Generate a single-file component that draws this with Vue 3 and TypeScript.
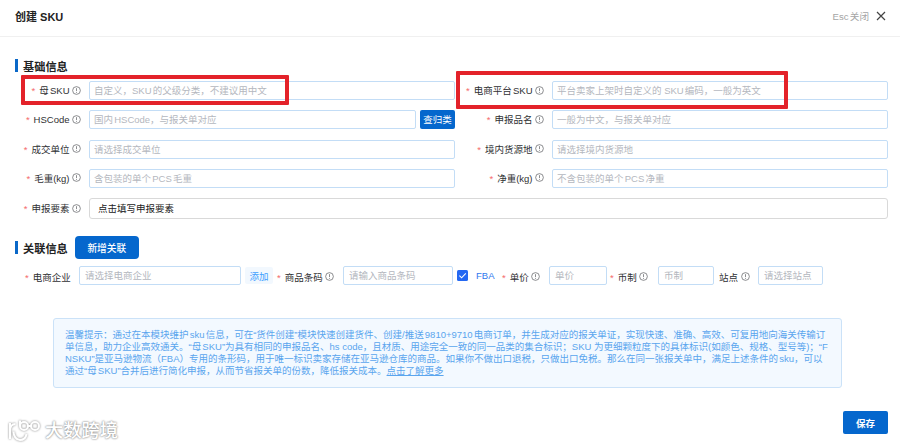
<template>
    <div class="dialog">
        <header class="dialog-header">
            <strong class="dialog-title">创建 SKU</strong>
            <div class="dialog-close" @click="close">
                <span>Esc关闭</span>
                <svg class="icon-close" viewBox="0 0 10 10">
                    <path d="M1 1L9 9M9 1L1 9" />
                </svg>
            </div>
        </header>

        <main class="dialog-body">
            <div class="section-title">基础信息</div>
            <div class="form-grid">
                <div v-for="field in fields" :key="field.label" class="form-item" :class="field.className">
                    <label class="form-label">
                        <i class="required">*</i>
                        <span>{{ field.label }}</span>
                        <svg class="icon-info" viewBox="0 0 10 10">
                            <circle cx="5" cy="5" r="4.3" />
                            <path d="M5 2.4V5.7M5 6.7V7.6" />
                        </svg>
                    </label>
                    <button v-if="field.button" class="btn-fill">{{ field.button }}</button>
                    <input v-else v-model="form[field.label]" class="form-control" type="text"
                        :placeholder="field.placeholder">
                    <button v-if="field.action" class="btn-check">{{ field.action }}</button>
                    <div v-if="field.marked" class="mark"></div>
                </div>
            </div>

            <div class="section-title section-title--relation">
                关联信息
                <button class="btn-new">新增关联</button>
            </div>
            <div class="relation-row">
                <template v-for="item in relations" :key="item.label">
                    <label class="relation-label" :class="'relation-label--' + item.name">
                        <i v-if="item.required" class="required">*</i>
                        <span>{{ item.label }}</span>
                        <svg v-if="item.info" class="icon-info" viewBox="0 0 10 10">
                            <circle cx="5" cy="5" r="4.3" />
                            <path d="M5 2.4V5.7M5 6.7V7.6" />
                        </svg>
                    </label>
                    <input v-model="form[item.label]" class="form-control" :class="'control--' + item.name" type="text"
                        :placeholder="item.placeholder">
                    <button v-if="item.name === 'company'" class="btn-add">添加</button>
                    <div v-if="item.name === 'barcode'" class="fba" @click="fba = !fba">
                        <span class="checkbox" :class="{ 'checkbox--checked': fba }">
                            <svg v-if="fba" viewBox="0 0 11 11">
                                <path d="M2.4 5.6L4.6 7.8L8.8 3.3" />
                            </svg>
                        </span>
                        <span>FBA</span>
                    </div>
                </template>
            </div>

            <div class="tips">
                <p v-for="(line, index) in tips" :key="index" class="tips-line">{{ line
                    }}<a v-if="index === tips.length - 1" class="tips-link">点击了解更多</a></p>
            </div>
        </main>

        <footer class="dialog-footer">
            <div class="watermark">
                <svg class="watermark-logo" viewBox="0 0 34 24">
                    <path d="M2 4V20M2 12C2 7 4 5 7.500 5M5.500 12.500C5.500 17 8 21 12 21C15.500 21 18 18.500 18.500 15" />
                    <path d="M12 1.500V7" />
                    <circle cx="16" cy="7" r="4" />
                    <circle cx="27" cy="7" r="4" />
                    <path d="M20 7H23" />
                </svg>
                <span>大数跨境</span>
            </div>
            <button class="btn-save">保存</button>
        </footer>
    </div>
</template>
<script lang="ts" setup>
import { reactive, ref } from 'vue';

interface Field {
    label: string;
    placeholder?: string;
    button?: string;
    action?: string;
    marked?: boolean;
    className?: string;
}

interface Relation {
    name: string;
    label: string;
    placeholder: string;
    required: boolean;
    info: boolean;
}

const emit = defineEmits(['close']);

const form = reactive<Record<string, string>>({});
const fba = ref(true);

const fields: Field[] = [
    { label: '母SKU', placeholder: '自定义，SKU的父级分类，不建议用中文', marked: true, className: 'form-item--parent' },
    { label: '电商平台SKU', placeholder: '平台卖家上架时自定义的 SKU编码，一般为英文', marked: true, className: 'form-item--platform' },
    { label: 'HSCode', placeholder: '国内HSCode，与报关单对应', action: '查归类' },
    { label: '申报品名', placeholder: '一般为中文，与报关单对应' },
    { label: '成交单位', placeholder: '请选择成交单位' },
    { label: '境内货源地', placeholder: '请选择境内货源地' },
    { label: '毛重(kg)', placeholder: '含包装的单个PCS毛重' },
    { label: '净重(kg)', placeholder: '不含包装的单个PCS净重' },
    { label: '申报要素', button: '点击填写申报要素', className: 'form-item--full' },
];

const relations: Relation[] = [
    { name: 'company', label: '电商企业', placeholder: '请选择电商企业', required: true, info: false },
    { name: 'barcode', label: '商品条码', placeholder: '请输入商品条码', required: true, info: true },
    { name: 'price', label: '单价', placeholder: '单价', required: true, info: true },
    { name: 'currency', label: '币制', placeholder: '币制', required: true, info: true },
    { name: 'site', label: '站点', placeholder: '请选择站点', required: false, info: true },
];

const tips = [
    '温馨提示：通过在本模块维护sku信息，可在“货件创建”模块快速创建货件、创建/推送9810+9710电商订单，并生成对应的报关单证，实现快速、准确、高效、可复用地向海关传输订',
    '单信息，助力企业高效通关。“母SKU”为具有相同的申报品名、hs code，且材质、用途完全一致的同一品类的集合标识；SKU 为更细颗粒度下的具体标识(如颜色、规格、型号等)；“F',
    'NSKU”是亚马逊物流（FBA）专用的条形码，用于唯一标识卖家存储在亚马逊仓库的商品。如果你不做出口退税，只做出口免税。那么在同一张报关单中，满足上述条件的sku，可以',
    '通过“母SKU”合并后进行简化申报，从而节省报关单的份数，降低报关成本。',
];

const close = () => {
    emit('close');
};
</script>
<style>
body {
    background: #fff;
}
</style>
<style scoped>
.dialog {
    display: flex;
    flex-direction: column;
    box-sizing: border-box;
    width: 900px;
    height: 448px;
    overflow: hidden;
    background: #fff;
    color: #303133;
    font-family: "Liberation Sans", "Noto Sans CJK SC", sans-serif;
    font-size: 9.5px;
    text-autospace: normal;
}

.dialog * {
    box-sizing: border-box;
}

button,
input {
    margin: 0;
    font-family: inherit;
    font-size: inherit;
    text-autospace: inherit;
}

.dialog-header {
    display: flex;
    flex: none;
    align-items: center;
    justify-content: space-between;
    height: 37px;
    padding: 0 14px 4px 15px;
    border-bottom: 1px solid #f0f0f0;
}

.dialog-title {
    font-size: 11px;
    font-weight: 600;
    color: #222;
}

.dialog-close {
    display: flex;
    align-items: center;
    gap: 7px;
    color: #a5a5a5;
    font-size: 9.6px;
    cursor: pointer;
}

.icon-close {
    width: 10px;
    height: 10px;
    fill: none;
    stroke: #444;
    stroke-width: 1.2;
}

.dialog-body {
    flex: 1;
    padding: 19px 12px 0 15px;
}

.section-title {
    display: flex;
    align-items: center;
    height: 19px;
    color: #222;
    font-size: 11.2px;
    font-weight: 600;
}

.section-title::before {
    content: '';
    width: 3px;
    height: 13px;
    margin-right: 5px;
    background: #0a68c8;
}

.section-title--relation {
    height: 23px;
    margin-top: 19px;
}

.form-grid {
    display: grid;
    grid-template-columns: 440px 1fr;
    grid-auto-rows: 19px;
    row-gap: 10.3px;
    margin-top: 6px;
}

.form-item {
    display: flex;
    position: relative;
    align-items: center;
}

.form-item--full {
    grid-column: 1 / 3;
    height: 21px;
}

.form-label {
    display: flex;
    flex: none;
    align-items: center;
    justify-content: flex-end;
    width: 66px;
    height: 19px;
    margin-right: 8px;
    padding-bottom: 1px;
    white-space: nowrap;
}

.form-item:nth-child(even) .form-label {
    width: 89px;
}

.required {
    margin: 1px 4px 0 0;
    color: #f56c6c;
    font-style: normal;
    line-height: 9px;
}

.icon-info {
    flex: none;
    width: 9px;
    height: 9px;
    margin-left: 2.5px;
    fill: none;
    stroke: #606266;
    stroke-width: 0.8;
}

.form-control {
    flex: 1;
    min-width: 0;
    height: 19px;
    padding: 0 4px;
    border: 1px solid #c3ddf6;
    border-radius: 2px;
    outline: none;
    background: #fff;
    color: #303133;
}

.form-control::placeholder {
    color: #b4b7be;
    opacity: 1;
}

.btn-check {
    width: 35px;
    height: 19px;
    margin-left: 4px;
    padding: 0 0 1px;
    border: 0;
    border-radius: 2px;
    background: #0567cd;
    color: #fff;
}

.btn-fill {
    flex: 1;
    height: 21px;
    padding: 0 8px 1px;
    border: 1px solid #d9d9d9;
    border-radius: 3px;
    background: #fff;
    color: #222;
    text-align: left;
}

/* highlight frame over the first row */
.mark {
    position: absolute;
    border: 4px solid #e3222a;
    border-radius: 1px;
    pointer-events: none;
}

.form-item--parent .mark {
    top: -6px;
    left: 6px;
    width: 268px;
    height: 30px;
}

.form-item--platform .mark {
    top: -10px;
    left: 1px;
    width: 332px;
    height: 38px;
}

.btn-new {
    width: 64px;
    height: 23px;
    margin-left: 7px;
    padding: 0;
    border: 0;
    border-radius: 4px;
    background: #0567cd;
    color: #fff;
    font-size: 9.7px;
    font-weight: 500;
}

.relation-row {
    display: flex;
    align-items: center;
    height: 19px;
    margin-top: 7px;
    padding-left: 10px;
}

.relation-row .form-control {
    flex: none;
    padding: 0 5px;
}

.relation-label {
    display: flex;
    flex: none;
    align-items: center;
    height: 20px;
    padding-top: 2px;
    white-space: nowrap;
}

.relation-label--company {
    width: 54px;
}

.relation-label--barcode {
    width: 66px;
}

.relation-label--price {
    width: 47px;
}

.relation-label--currency {
    width: 48px;
}

.relation-label--site {
    width: 39px;
}

.control--company {
    width: 162px;
}

.control--barcode {
    width: 110px;
}

.control--price {
    width: 58px;
    margin-right: 3px;
}

.control--currency {
    width: 56px;
    margin-right: 5px;
}

.control--site {
    width: 65px;
}

.btn-add {
    width: 28px;
    height: 17px;
    margin: 0 4px 0 4px;
    padding: 0;
    border: 0;
    border-radius: 2px;
    background: #f2f8fe;
    color: #409eff;
}

.fba {
    display: flex;
    align-items: center;
    width: 49px;
    padding-left: 4px;
    color: #2f78ee;
    cursor: pointer;
}

.checkbox {
    width: 11px;
    height: 11px;
    margin-right: 8px;
    border: 1px solid #c3ddf6;
    border-radius: 1.5px;
}

.checkbox--checked {
    border: 0;
    background: #2468f2;
}

.checkbox svg {
    display: block;
    fill: none;
    stroke: #fff;
    stroke-width: 1.1;
}

.tips {
    width: 789px;
    height: 70px;
    margin: 33px 0 0 38px;
    padding: 10px 11px;
    border: 1px solid #cbe2f8;
    border-radius: 3px;
    background: #f3f9ff;
    color: #5aa5ee;
}

.tips-line {
    height: 12px;
    margin: 0;
    line-height: 12px;
    white-space: nowrap;
}

.tips-link {
    text-decoration: underline;
    cursor: pointer;
}

.dialog-footer {
    display: flex;
    flex: none;
    align-items: center;
    justify-content: space-between;
    height: 38px;
    padding: 0 12px 13px 8px;
}

.watermark {
    display: flex;
    align-items: center;
    gap: 3px;
    padding-top: 16px;
    color: #fff;
    font-size: 18.3px;
    font-weight: 500;
    line-height: 24px;
    text-shadow: 0 0 2px #888, 0 0 2px #aaa;
}

.watermark-logo {
    width: 34px;
    height: 24px;
    fill: none;
    stroke: #fff;
    stroke-width: 2;
    filter: drop-shadow(0 0 1px #888);
}

.btn-save {
    width: 45px;
    height: 23px;
    padding: 0;
    border: 0;
    border-radius: 2px;
    background: #0567cd;
    color: #fff;
    font-weight: 600;
}
</style>
